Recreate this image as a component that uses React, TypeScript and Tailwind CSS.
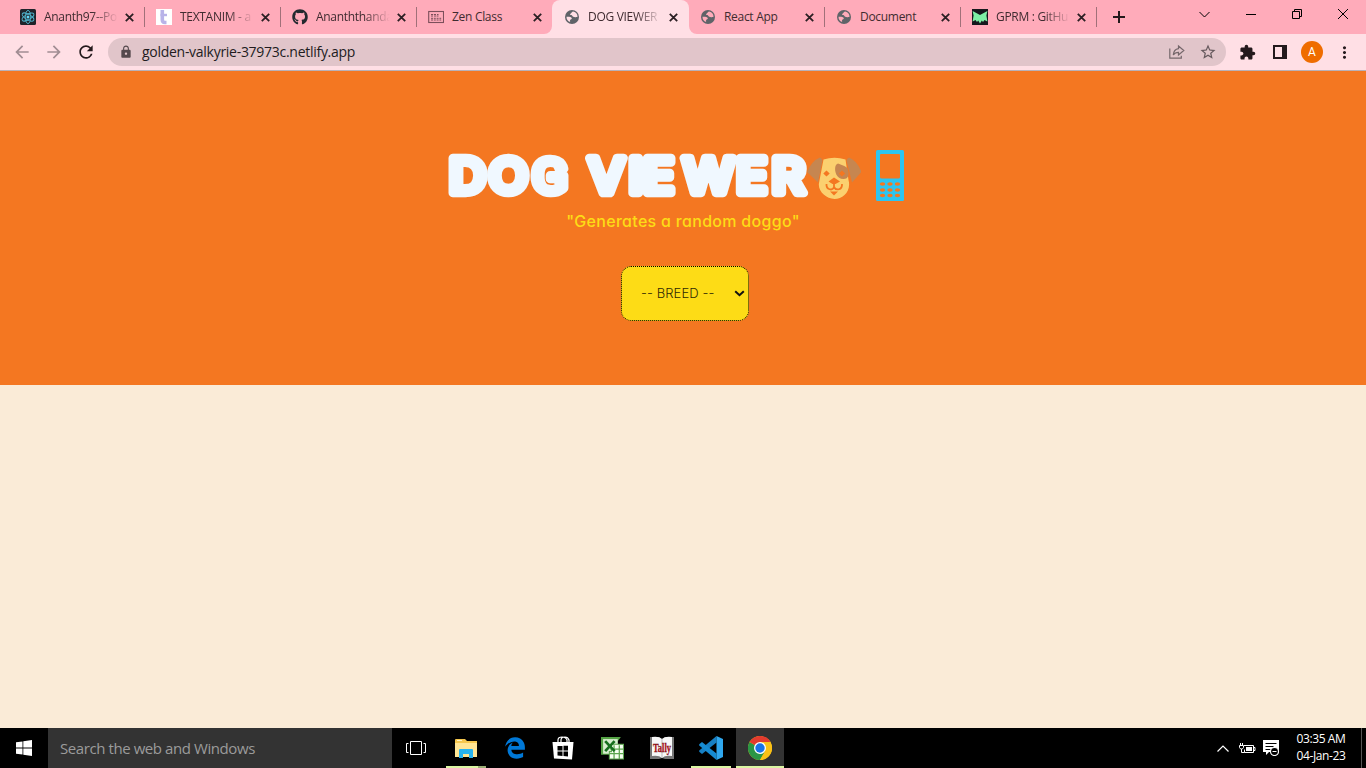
import React from "react";
import {
  MdArrowBack,
  MdArrowForward,
  MdExtension,
  MdLock,
  MdMoreVert,
  MdRefresh,
  MdStarBorder,
} from "react-icons/md";
import { FaEdgeLegacy, FaGithub } from "react-icons/fa";

const ReactFavicon = () => (
  <svg className="size-4" viewBox="0 0 16 16">
    <rect width="16" height="16" rx="1.5" fill="#20232a" />
    <g fill="none" stroke="#4fb3cc" strokeWidth="0.9">
      <ellipse cx="8" cy="8" rx="6.6" ry="2.7" transform="rotate(30 8 8)" />
      <ellipse cx="8" cy="8" rx="6.6" ry="2.7" transform="rotate(90 8 8)" />
      <ellipse cx="8" cy="8" rx="6.6" ry="2.7" transform="rotate(150 8 8)" />
    </g>
    <circle cx="8" cy="8" r="1.5" fill="#61dafb" />
  </svg>
);

const TextanimFavicon = () => (
  <svg className="size-4" viewBox="0 0 16 16">
    <rect width="16" height="16" fill="#fff" />
    <path d="M6.300 1v9.500q0 3 2.500 3h1.700" fill="none" stroke="#b9b3e8" strokeWidth="3.6" />
    <path d="M4.500 6H11" stroke="#b9b3e8" strokeWidth="2.4" />
  </svg>
);

const ZenFavicon = () => (
  <svg className="size-4" viewBox="0 0 16 16" fill="none" stroke="#7c4f5b">
    <rect x="0.7" y="2.5" width="14.8" height="11" strokeWidth="1.1" />
    <path d="M3 5.500h2.200M6 5.500h2M9 5.500h1.500M3 7h2M6 7h2.400M9 7h1.500M3 9.300h2M5.800 9.300h2M8.600 9.300h2M11.400 9.300h1.800M3 11h2.200M6 11h1.800M8.600 11h2M11.400 11h1.800" strokeWidth="1" />
  </svg>
);

const GprmFavicon = () => (
  <svg className="size-4" viewBox="0 0 16 16">
    <rect width="16" height="16" fill="#16181d" />
    <path d="M.6 2 8 6l7.400-4-1 4.500 1 6-2.900-1.500-1.500 2-1.200-1.500L8 14.500 6.200 11.500 5 13l-1.500-2-2.900 1.500 1-6Z" fill="#7df0a5" />
  </svg>
);

const Globe = ({ land = "#ffabba" }: { land?: string }) => (
  <svg className="size-[14px]" viewBox="0 0 14 14">
    <circle cx="7" cy="7" r="7" fill="#5f6368" />
    <path
      d="M8.200 1.600C6.800 1.700 7 3 5.800 3.400 4.600 3.800 5 5 6.200 5.100c1.300.1.800 1.400 2 1.600 1 .2 1.400.9 2.600.5.800-.3 1.400-.3 1.700 0A5.500 5.500 0 0 0 8.200 1.600ZM1.500 6.800c1.600.1 3.700-.1 4.800.7 1.200.9.200 1.700-.7 2-.9.400-.4 1.400-.5 2.600A5.500 5.500 0 0 1 1.500 6.800Z"
      fill={land}
    />
  </svg>
);

const tabs: { title: string; icon: React.ReactNode; active?: boolean; rule?: boolean; fade?: boolean }[] = [
  { title: "Ananth97--Po", icon: <ReactFavicon />, rule: true, fade: true },
  { title: "TEXTANIM - a", icon: <TextanimFavicon />, rule: true, fade: true },
  { title: "Ananththanda", icon: <FaGithub className="size-4 text-[#24292f]" />, rule: true, fade: true },
  { title: "Zen Class", icon: <ZenFavicon /> },
  { title: "DOG VIEWER", icon: <Globe land="#ffdfe5" />, active: true, fade: true },
  { title: "React App", icon: <Globe />, rule: true },
  { title: "Document", icon: <Globe />, rule: true },
  { title: "GPRM : GitHu", icon: <GprmFavicon />, rule: true, fade: true },
];

function Tab({ title, icon, active, rule, fade }: (typeof tabs)[number]) {
  return (
    <div
      className={
        "relative flex h-[34px] shrink-0 items-center pl-3 " +
        (active ? "-mr-px w-[137px] rounded-t-lg bg-[#ffdfe5]" : "w-[136px]")
      }
    >
      {active && (
        <>
          <svg className="absolute bottom-0 -left-2 size-2" viewBox="0 0 8 8">
            <path d="M8 0v8H0a8 8 0 0 0 8-8Z" fill="#ffdfe5" />
          </svg>
          <svg className="absolute -right-2 bottom-0 size-2" viewBox="0 0 8 8">
            <path d="M0 0v8h8a8 8 0 0 1-8-8Z" fill="#ffdfe5" />
          </svg>
        </>
      )}
      <span className="flex size-4 shrink-0 items-center justify-center">{icon}</span>
      <span
        className={
          "ml-2 w-[74px] shrink-0 text-[12px] leading-4 tracking-[-0.3px] whitespace-nowrap text-[#3f2b30] " +
          (fade ? "[mask-image:linear-gradient(to_right,black_65%,transparent)]" : "")
        }
      >
        {title}
      </span>
      <svg className="ml-[7px] size-[9px] shrink-0" viewBox="0 0 9 9">
        <path d="m.8.8 7.400 7.400M8.200.8.8 8.200" stroke="#2b1f23" strokeWidth="1.8" />
      </svg>
      {rule && <span className="-mr-px ml-auto h-5 w-px bg-[#a17079]" />}
    </div>
  );
}

function TabStrip() {
  return (
    <div className="flex h-[34px] bg-[#ffabba] pl-2">
      {tabs.map((t) => (
        <Tab key={t.title} {...t} />
      ))}
      <svg className="mt-[11px] ml-[17px] size-3" viewBox="0 0 12 12">
        <path d="M6 0v12M0 6h12" stroke="#24191c" strokeWidth="2" />
      </svg>
      <div className="mr-[18px] ml-auto flex h-7 items-center gap-9 text-black">
        <svg className="size-[11px]" viewBox="0 0 11 11" fill="none" stroke="currentColor">
          <path d="m.5 3 5 5 5-5" />
        </svg>
        <svg className="size-[10px]" viewBox="0 0 10 10" stroke="currentColor">
          <path d="M0 5.500h10" />
        </svg>
        <svg className="size-[10px]" viewBox="0 0 10 10" fill="none" stroke="currentColor">
          <path d="M.5 2.500h7v7h-7zM2.500 2.500v-2h7v7h-2" />
        </svg>
        <svg className="size-[10px]" viewBox="0 0 10 10" stroke="currentColor">
          <path d="m0 0 10 10M10 0 0 10" />
        </svg>
      </div>
    </div>
  );
}

function Toolbar() {
  return (
    <div className="flex h-[37px] items-center border-b border-[#b9b1b7] bg-[#ffdfe5] pl-3">
      <MdArrowBack className="size-5 text-[#a18d93]" />
      <MdArrowForward className="ml-3 size-5 text-[#a18d93]" />
      <MdRefresh className="ml-3 size-5 text-[#24191c]" />
      <div className="ml-3 flex h-7 w-[1118px] items-center rounded-full bg-[#e1c5ca] pl-[11px]">
        <MdLock className="size-[14px] text-[#55494d]" />
        <span className="ml-[9px] text-[14px] leading-5 tracking-[-0.28px] text-[#221c1e]">
          golden-valkyrie-37973c.netlify.app
        </span>
        <svg className="ml-auto size-4" viewBox="0 0 16 16" fill="none" stroke="#75676b" strokeWidth="1.200">
          <path d="M.8 4.500v9.700h11.500v-2.500M9.500 2l5.300 4.500-5.300 4.500V8.400C7 8.400 5.500 9.200 4.300 11c.3-3.600 2-5.800 5.200-6.300Z" />
        </svg>
        <MdStarBorder className="mr-[9px] ml-[14px] size-[18px] text-[#66595d]" />
      </div>
      <MdExtension className="ml-[13px] size-[17px] text-[#24191c]" />
      <svg className="ml-[17px] size-[14px]" viewBox="0 0 14 14">
        <path d="M1 1h12v12H1z" fill="none" stroke="#24191c" strokeWidth="2" />
        <path d="M9 1h4v12H9z" fill="#24191c" />
      </svg>
      <span className="ml-[14px] flex size-[22px] items-center justify-center rounded-full bg-[#ef6c00] font-[Roboto] text-[12px] text-white">
        A
      </span>
      <MdMoreVert className="ml-[12px] size-[19px] text-[#24191c]" />
    </div>
  );
}

const Dog = () => (
  <svg className="h-[44px] w-[54px]" viewBox="0 0 54 44">
    <path d="M16.500 2.500Q27.500-1 38.500 2.500L41.500 23c3 11-5.500 19-14 19s-17-8-15.500-16Z" fill="#fbd06f" />
    <path d="M13 .5q2 1 2.500 3L11 25.500 0 15Q5 3.500 13 .5ZM42 .5q-2 1-2.500 3L45 25.500 54.500 15Q50 3.500 42 .5Z" fill="#c68650" />
    <path d="M31 6.500q6 2 9.500 4.500c2 6 1.500 11-4 11-7 0-9.500-8-8-13q.5-2 2.500-2.500Z" fill="#c68650" />
    <path d="m19.500 13.500 3.200 3-3.200 3-3.200-3ZM35 13.500l3.200 3-3.200 3-3.200-3ZM27 20.500l6 4-4.500 2.500h-3L21.500 24.500Z" fill="#f47721" />
    <path d="M27 26v5M19.500 27c-.5 6 6 7 7.500 3 2 4 8.500 3 8-3" fill="none" stroke="#f47721" strokeWidth="1.800" />
    <path d="M23 34.500h8l-4 4Z" fill="#f47721" />
  </svg>
);

const Phone = () => (
  <svg className="h-[51px] w-7" viewBox="0 0 28 51">
    <rect width="28" height="51" rx="1.500" fill="#2cc5f1" />
    <path d="M5 4h18q1 0 1 1v22q0 1.500-1.500 1.500h-17Q4 28.500 4 27V5q0-1 1-1Z" fill="#f47721" />
    <g fill="#f47721">
      {[34, 40, 45.5].map((y) =>
        [6.5, 14, 21.5].map((x) => (
          <ellipse key={x + "-" + y} cx={x} cy={y} rx="2.7" ry="1.800" />
        )),
      )}
    </g>
  </svg>
);

function Hero() {
  return (
    <section className="flex h-[314px] flex-col items-center bg-[#f47721] pt-[79px]">
      <h1 className="mr-[14px] flex h-[51px] w-[456px] items-start">
        <svg className="h-[51px] w-[359px] shrink-0 overflow-visible" viewBox="0 0 359 51">
          <text
            transform="scale(1.07 1)"
            y="42.500"
            x="0.900 38 78.500 114 131 169 182.500 219.500 269.500 302.500"
            fill="#f0f8ff"
            stroke="#f0f8ff"
            strokeWidth="8.500"
            strokeLinejoin="round"
            fontFamily="Inter, sans-serif"
            fontWeight="500"
            fontSize="48"
          >
            DO<tspan fontFamily="Roboto, sans-serif" fontWeight="400" fontSize="49">G</tspan> VIEWER
          </text>
        </svg>
        <span className="mt-[7px] shrink-0"><Dog /></span>
        <span className="ml-[15px] shrink-0"><Phone /></span>
      </h1>
      <p className="mt-2 font-[Inter] text-[16px] leading-6 font-medium tracking-[0.3px] whitespace-nowrap text-[#fddc16] [font-feature-settings:'cv11']">
        "Generates a random doggo"
      </p>
      <button className="mt-[33px] ml-1 flex h-[55px] w-[128px] items-center rounded-[10px] border border-dotted border-black bg-[#fddc16] pr-[3px] pl-[19px]">
        <span className="font-[Inter] text-[13px] font-light tracking-[0.1px] whitespace-nowrap text-[#2e2904]">-- BREED --</span>
        <svg className="ml-auto h-[7px] w-[11px]" viewBox="0 0 11 7">
          <path d="m1.200 1.200 4.300 4 4.300-4" fill="none" stroke="#111" strokeWidth="2" />
        </svg>
      </button>
    </section>
  );
}

const FolderIcon = () => (
  <svg className="h-[19px] w-[22px]" viewBox="0 0 22 19">
    <path d="M0 1q0-1 1-1h9l2 2h10v16H0Z" fill="#f5c74e" />
    <path d="M0 4h22v14H0Z" fill="#ffe594" />
    <path d="M2 1h5v1H2Z" fill="#fff3c2" />
    <path d="M4 19v-8q0-1 1-1h12q1 0 1 1v8h-4v-4H8v4Z" fill="#27b3ef" />
  </svg>
);

const StoreIcon = () => (
  <svg className="h-[24px] w-[22px]" viewBox="0 0 22 24">
    <path d="M6 7V4q0-3 4-3t5 3v3M9 6V4q0-3 4-3 3 0 4 3v2" fill="none" stroke="#fff" strokeWidth="1.200" />
    <path d="M.5 6h21L20 23.500 2 22.500Z" fill="#fff" />
    <path d="M5.500 10h5v4.500h-5zM11.500 9.800h4.500v4.700h-4.500zM5.500 15.500h5V20l-5-.5zM11.500 15.500h4.500v5l-4.500-.4z" fill="#000" />
  </svg>
);

const ExcelIcon = () => (
  <svg className="size-[23px]" viewBox="0 0 22 22">
    <path d="M0 0h19l-3 4v13H0Z" fill="#55a345" />
    <path d="M2 2h14v14H2Z" fill="#d9efd1" />
    <path d="M10 7h11.500v14H8v-7h2Z" fill="#f6fff1" stroke="#5da650" />
    <path d="M9 11.500h13M8 16h14M12.500 8v13M17.500 8v13" stroke="#5da650" strokeWidth="1.200" />
    <path d="m4 4 9 9.500M13 4 4 13.500" stroke="#17701f" strokeWidth="2.600" />
  </svg>
);

const TallyIcon = () => (
  <svg className="size-6 overflow-visible" viewBox="0 0 24 24">
    <path d="M0 1h9l3 2 3-2h9v22h-9l-3-1-3 1H0Z" fill="#777" />
    <path d="M2 1q7-1 10 2 3-3 10-2v19q-7-1-10 2-3-3-10-2Z" fill="#f8f8f8" />
    <path d="M12 3v19" stroke="#bbb" />
    <text x="3" y="16" fontFamily="Liberation Serif, serif" fontWeight="700" fontSize="12" textLength="18" lengthAdjust="spacingAndGlyphs" fill="#c00e19" stroke="#651014" strokeWidth=".3">Tally</text>
  </svg>
);

const CodeIcon = () => (
  <svg className="size-6" viewBox="0 0 24 24">
    <path d="M17.500 6.500 3 18l-2.500-2q-.8-1 0-1.800L17.500 0Z" fill="#1780c4" />
    <path d="M17.500 17.500 3 6 .5 8q-.8 1 0 1.800L17.500 24Z" fill="#168bd2" />
    <path d="M17.500 0 24 3v18l-6.500 3Z" fill="#2fa7ee" />
  </svg>
);

const ChromeIcon = () => (
  <svg className="size-6" viewBox="0 0 24 24">
    <circle cx="12" cy="12" r="12" fill="#fbc116" />
    <path d="M12 12 1.600 6A12 12 0 0 0 12 24l5.200-9Z" fill="#2a9645" />
    <path d="M12 12 1.600 6A12 12 0 0 1 22.400 6H12Z" fill="#e33b2e" />
    <path d="M12 6h10.400A12 12 0 0 1 12 24l5.200-9Z" fill="#fbc116" />
    <circle cx="12" cy="12" r="6" fill="#fff" />
    <circle cx="12" cy="12" r="4.700" fill="#1a73e8" />
  </svg>
);

function Taskbar() {
  return (
    <footer className="flex h-10 items-stretch bg-black text-white">
      <div className="flex w-12 items-center justify-center">
        <svg className="size-4" viewBox="0 0 16 16">
          <path d="M0 2.300 6.500 1.400v6.100H0zM7.300 1.200 16 0v7.500H7.300zM0 8.400h6.500v6.200L0 13.700zM7.300 8.400H16V16l-8.700-1.200z" fill="#fff" />
        </svg>
      </div>
      <div className="flex w-[344px] items-center bg-[#333] pt-px pl-3 text-[15px] tracking-[-0.42px] text-[#9b9b9b]">
        <span>Search the web and Windows</span>
      </div>
      <div className="flex w-12 items-center justify-center">
        <svg className="h-[14px] w-5" viewBox="0 0 20 14" fill="none" stroke="#fff">
          <path d="M4.500.5h11v13h-11zM2.500 2.500h-2v9h2M17.500 2.500h2v9h-2" />
        </svg>
      </div>
      <div className="ml-px flex w-[50px] flex-col items-center">
        <span className="flex grow items-center pt-0.5"><FolderIcon /></span>
        <span className="flex h-0.5 w-10"><i className="w-8 bg-[#daf5a2]" /><i className="w-2 bg-[#9bae75]" /></span>
      </div>
      <div className="flex w-12 items-center justify-center"><FaEdgeLegacy className="size-[22px] text-[#0078d7]" /></div>
      <div className="flex w-[50px] items-center justify-center pr-0.5"><StoreIcon /></div>
      <div className="flex w-12 items-center justify-center pr-0.5"><ExcelIcon /></div>
      <div className="flex w-[50px] items-center justify-center"><TallyIcon /></div>
      <div className="flex w-12 flex-col items-center">
        <span className="flex grow items-center pt-0.5"><CodeIcon /></span>
        <span className="h-0.5 w-10 bg-[#daf5a2]" />
      </div>
      <div className="ml-px flex w-12 flex-col items-center bg-[#333]">
        <span className="flex grow items-center pt-0.5"><ChromeIcon /></span>
        <span className="h-0.5 w-full bg-[#daf5a2]" />
      </div>
      <div className="ml-auto flex items-center">
        <svg className="h-[7px] w-3" viewBox="0 0 12 7" fill="none" stroke="#fff" strokeWidth="1.200">
          <path d="m.5 6.500 5.500-5.500 5.500 5.500" />
        </svg>
        <svg className="ml-[10px] h-[13px] w-[17px]" viewBox="0 0 17 13" fill="none" stroke="#fff">
          <path d="M5 3.500h9.500v7h-9v-3M14.500 5.500h1.500v3h-1.500M.5 3.500h4v2q-.5 1.500-2 1.500t-2-1.500zM1.500 1v2.500M3.500 1v2.500M2.500 7v3.500h3" />
          <path d="M7 5h6v4H7z" fill="#fff" stroke="none" />
        </svg>
        <svg className="ml-[7px] size-4" viewBox="0 0 16 16">
          <path d="M0 0h16v12H6l-3 3v-3H0Z" fill="#fff" />
          <path d="M2.500 3.500h11M2.500 6.500h8M2.500 9.500h5" stroke="#000" />
          <circle cx="11.500" cy="11.500" r="4" fill="#000" stroke="#fff" strokeWidth="1.200" />
          <path d="M9.500 11.500h4" stroke="#fff" />
        </svg>
        <div className="-mt-0.5 ml-4 flex w-[52px] flex-col items-center text-[12px] leading-[17px] tracking-[-0.4px] whitespace-nowrap">
          <span>03:35 AM</span>
          <span>04-Jan-23</span>
        </div>
        <span className="mr-1 ml-[14px] h-10 w-px bg-[#555]" />
      </div>
    </footer>
  );
}

export default function App() {
  return (
    <div className="flex h-[768px] w-[1366px] flex-col overflow-hidden bg-[#faebd7] font-['Open_Sans','Noto_Sans',sans-serif]">
      <TabStrip />
      <Toolbar />
      <Hero />
      <main className="grow" />
      <Taskbar />
    </div>
  );
}
